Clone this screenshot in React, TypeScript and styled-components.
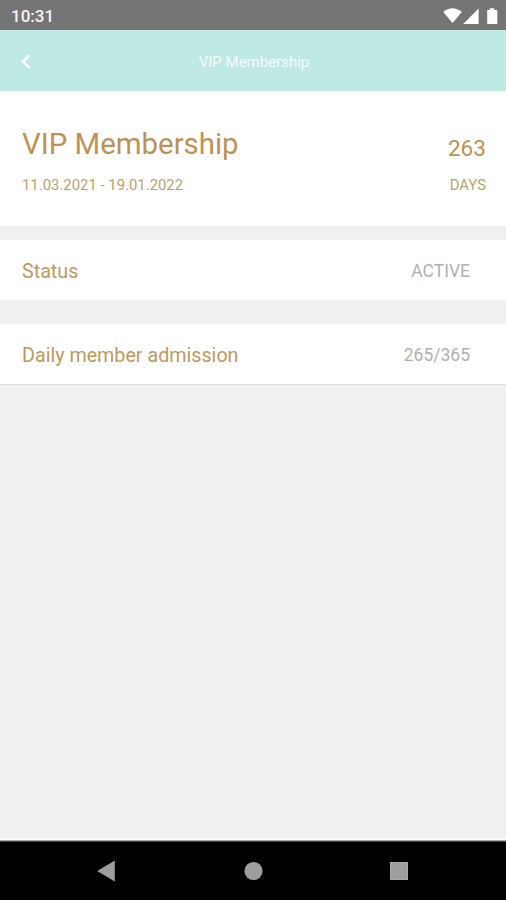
import React from 'react';
import styled, { createGlobalStyle } from 'styled-components';

const GlobalStyle = createGlobalStyle`
  * { box-sizing: border-box; }
  body { margin: 0; background: #f0f0f0; font-family: Roboto, 'Liberation Sans', sans-serif; }
`;

const Screen = styled.div`
  display: flex;
  flex-direction: column;
  height: 900px;
  background: #f0f0f0;
`;

const StatusBar = styled.div`
  display: flex;
  align-items: center;
  justify-content: space-between;
  height: 30px;
  padding: 2px 8px 0 11px;
  background: #757575;
  color: #f4f4f4;
  font-size: 17px;
  font-weight: 500;
`;

const Header = styled.header`
  display: grid;
  grid-template-columns: 50px 1fr 50px;
  align-items: center;
  height: 61px;
  background: #bfe9e3;
  color: #fff;
`;

const BackButton = styled.button`
  display: flex;
  padding: 1px 0 0 19px;
  border: 0;
  background: none;
  color: inherit;
`;

const HeaderTitle = styled.h1`
  margin: 0;
  padding: 2px 0 0 2px;
  text-align: center;
  font-size: 15px;
  font-weight: 400;
  opacity: 0.85;
`;

const Summary = styled.section`
  display: flex;
  justify-content: space-between;
  height: 135px;
  padding: 33px 20px 0 22px;
  background: #fff;
  color: #bc9355;
`;

const Column = styled.div<{ $end?: boolean }>`
  display: flex;
  flex-direction: column;
  align-items: ${(p) => (p.$end ? 'flex-end' : 'flex-start')};
`;

const Big = styled.div<{ $size: number; $offset?: number }>`
  height: 50px;
  padding-top: ${(p) => p.$offset ?? 0}px;
  font-size: ${(p) => p.$size}px;
  line-height: 40px;
`;

const Small = styled.div`
  font-size: 14.9px;
  line-height: 22px;
  color: #bd9f6c;
`;

const Row = styled.section<{ $gap: number; $line?: boolean }>`
  display: flex;
  align-items: center;
  justify-content: space-between;
  height: 60px;
  margin-top: ${(p) => p.$gap}px;
  padding: 2px 36px 0 22px;
  background: #fff;
  box-shadow: ${(p) => (p.$line ? '0 1px 0 #dedede' : 'none')};
`;

const Label = styled.span`
  font-size: 19.7px;
  color: #bd9a60;
`;

const Value = styled.span`
  padding-bottom: 1px;
  font-size: 17.5px;
  color: #b0b0b0;
`;

const NavBar = styled.nav`
  display: flex;
  align-items: center;
  justify-content: space-between;
  height: 62px;
  margin-top: auto;
  padding: 2px 97px 0 96px;
  border-top: 2px solid #fbfbfb;
  background: #000;
  box-shadow: inset 0 1px 0 #aaa, inset 0 2px 0 #444;
`;

export default function App() {
  return (
    <>
      <GlobalStyle />
      <Screen>
        <StatusBar>
          <span>10:31</span>
          <svg width="58" height="20" viewBox="440 5 58 20" fill="#fff">
            <path d="M443.3 11Q452.5 3.5 461.8 11L452.5 22Z" />
            <path d="M463.2 23H478.6V7.6Z" />
            <path d="M487.4 9.1H489.7V7.3H494.2V9.1H496.5Q497.3 9.1 497.3 10V22.2Q497.3 23.1 496.5 23.1H488Q487.2 23.1 487.2 22.2V10Z" />
          </svg>
        </StatusBar>
        <Header>
          <BackButton aria-label="Back">
            <svg width="12" height="15" viewBox="0 0 12 15" fill="none" stroke="#fff" strokeWidth="2.5">
              <path d="M10.5 1.2L4 7.5L10.5 13.8" />
            </svg>
          </BackButton>
          <HeaderTitle>VIP Membership</HeaderTitle>
        </Header>
        <Summary>
          <Column>
            <Big $size={29.4}>VIP Membership</Big>
            <Small>11.03.2021 - 19.01.2022</Small>
          </Column>
          <Column $end>
            <Big $size={22.6} $offset={5}>263</Big>
            <Small>DAYS</Small>
          </Column>
        </Summary>
        <Row $gap={14}>
          <Label>Status</Label>
          <Value>ACTIVE</Value>
        </Row>
        <Row $gap={24} $line>
          <Label>Daily member admission</Label>
          <Value>265/365</Value>
        </Row>
        <NavBar>
          <svg width="20" height="22" viewBox="0 0 20 22" fill="#9e9e9e">
            <path d="M1.2 11L18.8 .6V21.4Z" />
          </svg>
          <svg width="20" height="20" viewBox="0 0 20 20" fill="#9e9e9e">
            <circle cx="10.5" cy="10" r="9.1" />
          </svg>
          <svg width="20" height="20" viewBox="0 0 20 20">
            <rect x="1" y="1" width="18" height="18" fill="#aaa" />
            <rect x="2" y="2" width="16" height="16" fill="#9e9e9e" />
          </svg>
        </NavBar>
      </Screen>
    </>
  );
}
